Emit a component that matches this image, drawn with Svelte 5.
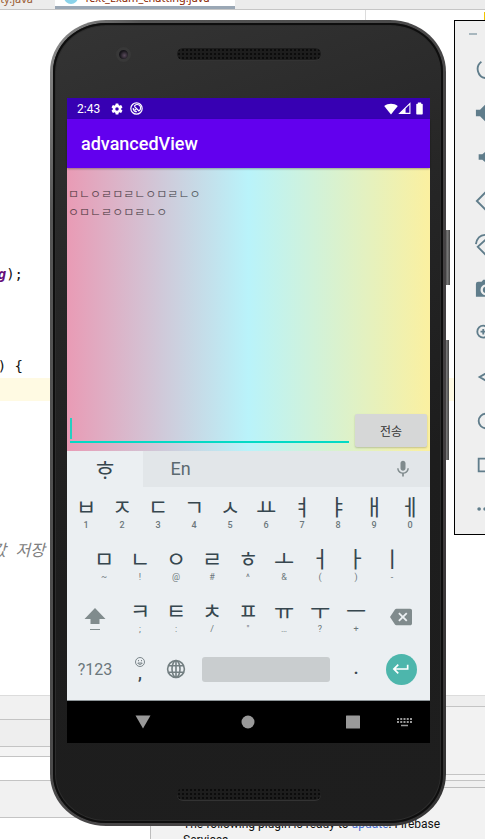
<script>
  const codeLines = Array.from({ length: 30 }, () => null);
  codeLines[11] = { kind: 'call', ident: 'msg', text: ');' };
  codeLines[15] = { kind: 'code', text: '(View v) {' };
  codeLines[16] = { kind: 'current', text: '' };
  codeLines[23] = { kind: 'comment', text: '// 값 저장' };

  const row1 = [['ㅂ', '1'], ['ㅈ', '2'], ['ㄷ', '3'], ['ㄱ', '4'], ['ㅅ', '5'], ['ㅛ', '6'], ['ㅕ', '7'], ['ㅑ', '8'], ['ㅐ', '9'], ['ㅔ', '0']];
  const row2 = [['ㅁ', '~'], ['ㄴ', '!'], ['ㅇ', '@'], ['ㄹ', '#'], ['ㅎ', '^'], ['ㅗ', '&'], ['ㅓ', '('], ['ㅏ', ')'], ['ㅣ', '-']];
  const row3 = [['ㅋ', ';'], ['ㅌ', ':'], ['ㅊ', '/'], ['ㅍ', '"'], ['ㅠ', '…'], ['ㅜ', '?'], ['ㅡ', '+']];

  const tools = [
    { name: 'Power', d: 'M7 4A10 10 0 0 0 12 22A10 10 0 0 0 17 4M12 2v10' },
    { name: 'Volume up', fill: true, d: 'M1 8.500v7h4.500L12 22V2L5.500 8.500z' },
    { name: 'Volume down', fill: true, d: 'M4 9v6h4l6 5V4L8 9z' },
    { name: 'Rotate left', d: 'M11 3 2 12l10 10 10-10L12 2z' },
    { name: 'Rotate right', d: 'M13 5 3 14l9 9 10-10zM1 11C2 5 6 1 12 1' },
    { name: 'Take screenshot', fill: true, d: 'M9 2 7.200 4H3.500A2.500 2.500 0 0 0 1 6.500v14h22V4h-6.200L15 2zM12 7a6 6 0 1 1 0 12 6 6 0 0 1 0-12zm0 2.500a3.500 3.500 0 1 0 0 7 3.500 3.500 0 0 0 0-7z' },
    { name: 'Zoom', d: 'M9 4a6.500 6.500 0 1 0 0 13 6.500 6.500 0 0 0 0-13zM14 15l7 7M6 10.500h6M9 7.500v6' },
    { name: 'Back', d: 'M19 4 5 12l14 8z' },
    { name: 'Home', d: 'M12 4a8 8 0 1 0 0 16 8 8 0 0 0 0-16z' },
    { name: 'Overview', d: 'M4 5h14v14H4z' },
    { name: 'More', fill: true, d: 'M4.500 10a2 2 0 1 0 0 4 2 2 0 0 0 0-4zM11 10a2 2 0 1 0 0 4 2 2 0 0 0 0-4zM17.500 10a2 2 0 1 0 0 4 2 2 0 0 0 0-4z' }
  ];

  let message = $state('');
</script>

{#snippet letterKey(letter, hint)}
  <button class="key" type="button"><span class="letter">{letter}</span><span class="hint">{hint}</span></button>
{/snippet}

<div class="desktop">
  <div class="ide">
    <div class="tabs">
      <div class="tab">Activity.java</div>
      <div class="tab active"><i class="dot"></i>Text_Exam_chatting.java</div>
    </div>
    <div class="editor">
      <div class="lines">
        {#each codeLines as line}
          <div class="line" class:current={line?.kind === 'current'}>
            {#if line}
              <span class="code" class:comment={line.kind === 'comment'}>{#if line.ident}<b>{line.ident}</b>{/if}{line.text}</span>
            {/if}
          </div>
        {/each}
      </div>
      <span class="guide"></span>
      <span class="mark"></span>
    </div>
    <div class="panels">
      <div class="left">
        <div class="p1"></div>
        <div class="p2"></div>
        <div class="p3"></div>
        <div class="p4"></div>
        <div class="p5"></div>
      </div>
      <div class="right">
        <div class="r1"></div>
        <div class="r2"></div>
        <div class="r3"></div>
      </div>
    </div>
  </div>

  <div class="notice">The following plugin is ready to <a href="#update">update</a>: Firebase Services</div>

  <div class="side power"></div>
  <div class="side volume"></div>

  <div class="phone">
    <div class="body">
      <div class="top">
        <span class="camera"></span>
        <span class="speaker"></span>
      </div>

      <div class="screen">
        <div class="status">
          <span>2:43</span>
          <svg width="14" height="14" viewBox="0 0 24 24" fill="#fff" fill-rule="evenodd"><path d="M19.140 12.940a7.100 7.100 0 0 0 0-1.880l2.030-1.580a.5.5 0 0 0 .12-.61l-1.920-3.320a.5.5 0 0 0-.59-.22l-2.390.96a7 7 0 0 0-1.620-.94l-.36-2.540a.5.5 0 0 0-.48-.41h-3.840a.5.5 0 0 0-.47.41l-.36 2.540a7.300 7.300 0 0 0-1.620.94l-2.390-.96a.5.5 0 0 0-.59.22L2.740 8.870a.5.5 0 0 0 .12.61l2.030 1.580a7 7 0 0 0 0 1.880l-2.030 1.580a.5.5 0 0 0-.12.61l1.920 3.320c.12.22.37.29.59.22l2.390-.96c.5.38 1.030.7 1.620.94l.36 2.540c.05.24.24.41.48.41h3.840c.24 0 .44-.17.47-.41l.36-2.540a7 7 0 0 0 1.620-.94l2.390.96c.22.08.47 0 .59-.22l1.920-3.320a.5.5 0 0 0-.12-.61zM12 15a3 3 0 1 1 0-6 3 3 0 0 1 0 6z" /></svg>
          <svg class="sync" width="13" height="13" viewBox="0 0 24 24" fill="none" stroke="#fff" stroke-width="2.200"><circle cx="12" cy="12" r="10.500" /><path d="M8 7.500A6.300 6.300 0 1 1 17 16M6 11a6.300 6.300 0 0 0 7 7M8 8l9 9M8.500 13l3 2" /></svg>
          <span class="grow"></span>
          <svg width="14" height="14" viewBox="0 0 24 24" fill="#fff"><path d="M12 3C7.790 3 3.700 4.410.38 7 4.410 12.060 7.890 16.370 12 21.500c4.080-5.080 8.240-10.260 11.650-14.500C20.320 4.410 16.220 3 12 3z" /></svg>
          <svg width="13" height="13" viewBox="0 0 24 24"><path d="M22 3v18H3z" fill="none" stroke="#fff" stroke-width="2" /><path d="M14 11v10H3z" fill="#fff" /></svg>
          <svg class="battery" width="13" height="13" viewBox="0 0 24 24" fill="#fff"><path d="M16.500 3H15V1H9v2H7.500C6.500 3 6 3.600 6 4.300v17.400c0 .7.500 1.300 1.300 1.300h9.400c.8 0 1.300-.6 1.300-1.300V4.300c0-.7-.5-1.300-1.500-1.300z" /></svg>
        </div>
        <h1>advancedView</h1>

        <div class="chat">
          <div class="log">ㅁㄴㅇㄹㅁㄹㄴㅇㅁㄹㄴㅇ<br />ㅇㅁㄴㄹㅇㅁㄹㄴㅇ</div>
          <form class="compose" onsubmit={(e) => e.preventDefault()}>
            <div class="field">
              <input type="text" aria-label="메시지" bind:value={message} />
              <i class="caret"></i>
            </div>
            <button class="send" type="submit">전송</button>
          </form>
        </div>

        <div class="keyboard">
          <div class="langs">
            <button class="lang on" type="button">ᄒᆞ</button>
            <button class="lang" type="button">En</button>
            <span class="grow"></span>
            <button class="mic" type="button" aria-label="Voice input">
              <svg width="20" height="20" viewBox="0 0 24 24" fill="#808b8d"><path d="M12 14c1.660 0 3-1.340 3-3V5c0-1.660-1.340-3-3-3S9 3.340 9 5v6c0 1.660 1.340 3 3 3zm5.300-3c0 3-2.540 5.100-5.300 5.100S6.700 14 6.700 11H5c0 3.410 2.720 6.230 6 6.720V21h2v-3.280c3.280-.48 6-3.300 6-6.720z" /></svg>
            </button>
          </div>
          <div class="row digits">
            {#each row1 as [l, h]}{@render letterKey(l, h)}{/each}
          </div>
          <div class="row">
            {#each row2 as [l, h]}{@render letterKey(l, h)}{/each}
          </div>
          <div class="row">
            <button class="key wide" type="button" aria-label="Shift">
              <svg width="22" height="26" viewBox="0 0 22 26" fill="#808b8d"><path d="M11 4 .5 15H6.500v5h9v-5h6zM6 25h10v1H6z" /></svg>
            </button>
            {#each row3 as [l, h]}{@render letterKey(l, h)}{/each}
            <button class="key wide" type="button" aria-label="Backspace">
              <svg width="22" height="22" viewBox="0 0 24 24" fill="#808b8d"><path d="M22 3H7c-.69 0-1.230.35-1.590.88L0 12l5.410 8.110c.36.53.9.890 1.590.890h15c1.100 0 2-.9 2-2V5c0-1.100-.9-2-2-2zm-3 12.590L17.590 17 14 13.410 10.410 17 9 15.590 12.590 12 9 8.410 10.410 7 14 10.590 17.590 7 19 8.410 15.410 12z" /></svg>
            </button>
          </div>
          <div class="row">
            <button class="key wide mode" type="button">?123</button>
            <button class="key comma" type="button">
              <svg width="10" height="10" viewBox="0 0 20 20" fill="none" stroke="#6f7b80" stroke-width="1.800"><circle cx="10" cy="10" r="9" /><path d="M5.500 12a5 5 0 0 0 9 0z" /><path d="M7 6v2.500M13 6v2.500" /></svg>
              <span>,</span>
            </button>
            <button class="key" type="button" aria-label="Switch language">
              <svg width="20" height="20" viewBox="0 0 20 20" fill="none" stroke="#737f82" stroke-width="1.600"><circle cx="10" cy="10" r="8.400" /><ellipse cx="10" cy="10" rx="4" ry="8.400" /><path d="M10 1.600v16.800M2.500 6.800h15M2.500 13.200h15" /></svg>
            </button>
            <button class="key space" type="button" aria-label="Space"><span></span></button>
            <button class="key period" type="button">.</button>
            <button class="key wide" type="button" aria-label="Enter">
              <span class="enter"><svg width="20" height="20" viewBox="0 0 24 24" fill="#fff"><path d="M19 7v4H5.830l3.580-3.590L8 6l-6 6 6 6 1.410-1.410L5.830 13H21V7z" /></svg></span>
            </button>
          </div>
        </div>

        <div class="nav">
          <button class="n1" type="button" aria-label="Back"><svg width="16" height="14" viewBox="0 0 16 14" fill="#999"><path d="M.5.500h15L8 13.500z" /></svg></button>
          <button class="n2" type="button" aria-label="Home"><svg width="14" height="14" viewBox="0 0 14 14" fill="#999"><circle cx="7" cy="7" r="6.500" /></svg></button>
          <button class="n3" type="button" aria-label="Recents"><svg width="14" height="14" viewBox="0 0 14 14" fill="#999"><rect width="14" height="13" y=".5" rx=".5" /></svg></button>
          <button class="n4" type="button" aria-label="Keyboard"><svg width="15" height="10" viewBox="0 0 15 10"><path d="M0 2h15M0 5h15" stroke="#999" stroke-width="2" stroke-dasharray="2 1.250" /><path d="M4 8.500h7" stroke="#999" stroke-width="1.500" /></svg></button>
        </div>
      </div>

      <div class="bottom"><span class="speaker"></span></div>
    </div>
  </div>

  <div class="toolbar">
    <div class="caption"><span class="min"></span></div>
    {#each tools as t}
      <button type="button" aria-label={t.name}>
        <svg width="22" height="22" viewBox="0 0 24 24" fill={t.fill ? '#607d8b' : 'none'} fill-rule="evenodd" stroke={t.fill ? 'none' : '#607d8b'} stroke-width="2"><path d={t.d} /></svg>
      </button>
    {/each}
  </div>
</div>

<style>
  .desktop {
    position: relative;
    height: 100vh;
    min-height: 640px;
    overflow: hidden;
    background: #fff;
    font-family: Roboto, "Noto Sans CJK KR", sans-serif;
  }
  .desktop * { box-sizing: border-box; }
  button {
    border: 0;
    padding: 0;
    margin: 0;
    background: none;
    font: inherit;
    color: inherit;
  }
  svg { display: block; flex: none; }
  .grow { flex: 1; }

  .ide { display: flex; flex-direction: column; height: 100%; }
  .tabs {
    display: flex;
    height: 10px;
    overflow: hidden;
    background: #ececec;
    border-bottom: 1px solid #c6c6c6;
    font: 11px/16px "Noto Sans", sans-serif;
    color: #9a5b32;
  }
  .tab {
    display: flex;
    align-items: flex-end;
    justify-content: flex-end;
    width: 55px;
    padding: 0 22px 2px 0;
  }
  .tab.active {
    justify-content: flex-start;
    gap: 6px;
    width: 180px;
    padding: 0 0 0 9px;
    background: #fff;
    border-bottom: 3px solid #9aa7b5;
    color: #8b2500;
    white-space: nowrap;
  }
  .dot { flex: none; width: 14px; height: 14px; margin-bottom: 2px; border-radius: 50%; background: #8bd3ea; }
  .editor { position: relative; flex: 1; min-height: 0; overflow: hidden; }
  .line {
    display: flex;
    height: 23px;
    font: 14px/23px "DejaVu Sans Mono", "Noto Sans CJK KR", monospace;
    color: #111;
    white-space: nowrap;
  }
  .line.current { background: #fffae3; }
  .code { display: flex; justify-content: flex-end; width: 23px; white-space: pre; }
  .code b { color: #660e7a; font-style: italic; }
  .code.comment { width: 45px; color: #808080; font-size: 16px; font-style: italic; }
  .guide { position: absolute; top: 0; bottom: 0; left: 365px; width: 1px; background: #dcdcdc; }
  .mark { position: absolute; top: 2px; right: 0; width: 1px; height: 10px; background: #f0c400; }
  .panels {
    display: flex;
    height: 144px;
    border-top: 1px solid #dcdcdc;
    background: #f0f0f0;
  }
  .panels div div { border-bottom: 1px solid #c4c4c4; }
  .left { flex: 1; background: #fff; }
  .right { flex: 1; }
  .p1 { height: 24px; background: #f1f1f1; }
  .p2 { height: 27px; background: #eee; }
  .p3 { height: 10px; background: #f4f4f4; }
  .p4 { height: 24px; background: #fff; }
  .p5 { height: 37px; background: #f1f1f1; }
  .r1 { height: 11px; background: #eee; }
  .r2 { height: 68px; background: #f2f2f2; }
  .r3 { height: 6px; background: #f5f5f5; }
  .notice {
    position: absolute;
    left: 150px;
    right: 0;
    bottom: 0;
    height: 52px;
    overflow: hidden;
    padding: 28px 32px 0;
    background: #f2f2f2;
    border: solid #bdbdbd;
    border-width: 1px 0 0 1px;
    font: 12px/16px Roboto, sans-serif;
    color: #111;
  }
  .notice a { color: #4a6fd0; text-decoration: none; }

  .side {
    position: absolute;
    right: 35px;
    width: 6px;
    background: linear-gradient(90deg, #333, #777 60%, #444);
  }
  .power { top: 230px; height: 55px; }
  .volume { top: 340px; height: 120px; right: 36px; }

  .phone {
    position: absolute;
    top: 20px;
    bottom: 13px;
    left: 50px;
    right: 39px;
    padding: 3px;
    border-radius: 56px / 52px;
    background: linear-gradient(115deg, #888 2%, #555 12%, #4c4c4c 40%, #403c3e 80%, #333);
  }
  .body {
    display: flex;
    flex-direction: column;
    height: 100%;
    padding: 0 13px 0 14px;
    border-radius: 53px / 49px;
    background: linear-gradient(160deg, #343434, #262626 30%, #1d1d1d 60%, #1e1e1e);
    box-shadow: inset 0 0 0 2px #0e0e0e, inset 0 0 0 3px #2c2c2c;
  }
  .top {
    display: grid;
    grid-template-columns: 1fr 144px 1fr;
    align-items: center;
    height: 75px;
    padding-bottom: 13px;
  }
  .camera {
    justify-self: start;
    width: 15px;
    height: 15px;
    margin-left: 49px;
    border: 3px solid #383838;
    border-radius: 50%;
    background: radial-gradient(circle at 60% 60%, #5a4b5c, #17151a 60%);
  }
  .speaker {
    height: 12px;
    border-radius: 6px;
    background: radial-gradient(circle, #0c0c0c 1px, transparent 1px) 0 0 / 4px 4px, #1d1d1d;
    box-shadow: 0 1px 0 #333;
  }
  .bottom { display: flex; justify-content: center; height: 80px; padding-top: 45px; }
  .bottom .speaker { width: 144px; }

  .screen { display: flex; flex: 1; flex-direction: column; min-height: 0; background: #000; }
  .status {
    display: flex;
    align-items: center;
    height: 21px;
    padding: 0 4px 0 10px;
    background: #3700b3;
    color: #fff;
    font-size: 12px;
    line-height: 20px;
  }
  .status span:first-child { margin-right: 10px; }
  .sync { margin-left: 6px; }
  .battery { margin-left: 2px; }
  h1 {
    position: relative;
    z-index: 1;
    flex: none;
    height: 49px;
    margin: 0;
    padding-left: 14px;
    background: #6200ee;
    box-shadow: 0 1px 2px #0005;
    color: #fff;
    font: 500 18px/50px Roboto, sans-serif;
  }
  .chat {
    display: flex;
    flex: 1;
    flex-direction: column;
    justify-content: space-between;
    min-height: 0;
    background: linear-gradient(90deg, #e99bb5, #b9f3fa 50%, #fbf0a0);
  }
  .log {
    padding: 17px 0 0 1px;
    font: 12px/18px "Noto Sans CJK KR", sans-serif;
    color: #0000008a;
  }
  .compose { display: flex; align-items: flex-end; gap: 6px; padding: 0 3px 4px; }
  .field { position: relative; flex: 1; height: 34px; }
  input {
    display: block;
    width: 100%;
    height: 30px;
    padding: 0 4px;
    border: 0;
    border-bottom: 2px solid #03dac5;
    outline: 0;
    background: none;
    font: 16px/24px Roboto, "Noto Sans CJK KR", sans-serif;
  }
  .caret { position: absolute; top: 5px; left: 0; width: 2px; height: 21px; background: #26cfc0; }
  .send {
    width: 72px;
    height: 33px;
    border-radius: 2px;
    background: #d6d7d7;
    box-shadow: 0 1px 2px #0003;
    color: #333;
    font: 12px/18px "Noto Sans CJK KR", sans-serif;
  }

  .keyboard {
    display: flex;
    flex: none;
    flex-direction: column;
    padding-bottom: 5px;
    border-bottom: 1px solid #8d9498;
    background: #ebeff2;
    color: #37474f;
  }
  .langs { display: flex; height: 36px; background: #e2e6e9; }
  .lang { width: 75px; font: 18px/36px Roboto, "Noto Sans CJK KR", sans-serif; color: #5c6a70; }
  .lang.on { width: 76px; background: #ebeff2; color: #37474f; font: 22px/34px "Noto Sans CJK KR", sans-serif; }
  .mic { display: flex; align-items: center; justify-content: center; width: 54px; }
  .row { display: flex; justify-content: center; height: 52px; padding: 0 2px 0 1px; }
  .key {
    display: flex;
    flex-direction: column;
    align-items: center;
    justify-content: center;
    width: 10%;
  }
  .wide { width: 15%; }
  .letter { font: 22px/20px "Noto Sans CJK KR", sans-serif; }
  .hint { margin-top: 4px; font: 9px/12px Roboto, sans-serif; color: #6b777c; }
  .digits .hint { font-weight: 500; }
  .mode { font-size: 16px; color: #6b777c; }
  .comma span { font: 700 16px/14px Roboto, sans-serif; }
  .period { font: 700 16px/24px Roboto, sans-serif; }
  .space { width: 40%; padding: 0 8px; }
  .space span { width: 100%; height: 25px; border-radius: 3px; background: #c9cdcf; }
  .enter {
    display: flex;
    align-items: center;
    justify-content: center;
    width: 31px;
    height: 31px;
    border-radius: 50%;
    background: #4db6ac;
  }

  .nav {
    display: grid;
    grid-template-columns: 50fr 52px 53fr 52px 53fr 52px 51px;
    flex: none;
    height: 42px;
    background: #000;
  }
  .nav button { display: flex; align-items: center; justify-content: center; grid-row: 1; }
  .n1 { grid-column: 2; }
  .n2 { grid-column: 4; }
  .n3 { grid-column: 6; }
  .n4 { grid-column: 7; }

  .toolbar {
    position: absolute;
    top: 20px;
    right: -33px;
    display: flex;
    flex-direction: column;
    width: 64px;
    padding-bottom: 3px;
    border: 1px solid #000;
    background: #efefef;
  }
  .caption { display: flex; align-items: center; height: 26px; padding-left: 14px; }
  .min { width: 8px; height: 2px; background: #a8b7be; }
  .toolbar button { display: flex; align-items: center; justify-content: center; height: 44px; }
</style>
